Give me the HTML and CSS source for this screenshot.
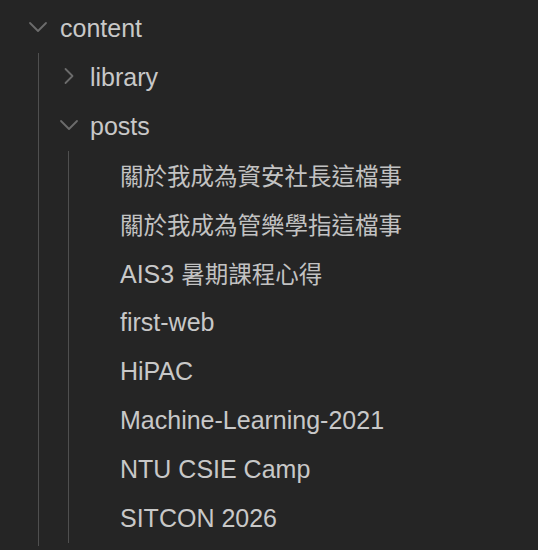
FILE: index.html
```html
<!DOCTYPE html>
<html lang="zh-Hant">
<head>
<meta charset="utf-8">
<title>Explorer</title>
<link rel="stylesheet" href="styles.css">
</head>
<body>
<div class="tree">
  <div class="row lvl0">
    <svg class="chev" viewBox="0 0 20 20"><path d="M2 6 L10 14 L18 6"/></svg>
    <span class="label">content</span>
  </div>
  <div class="children outer">
    <div class="row lvl1">
      <svg class="chev" viewBox="0 0 20 20"><path d="M6.5 3 L13.5 10 L6.5 17"/></svg>
      <span class="label">library</span>
    </div>
    <div class="row lvl1">
      <svg class="chev" viewBox="0 0 20 20"><path d="M2 6 L10 14 L18 6"/></svg>
      <span class="label">posts</span>
    </div>
    <div class="children inner">
      <div class="row file"><span class="spacer"></span><span class="label cjk">關於我成為資安社長這檔事</span></div>
      <div class="row file"><span class="spacer"></span><span class="label cjk">關於我成為管樂學指這檔事</span></div>
      <div class="row file"><span class="spacer"></span><span class="label">AIS3 <span class="cjk">暑期課程心得</span></span></div>
      <div class="row file"><span class="spacer"></span><span class="label">first-web</span></div>
      <div class="row file"><span class="spacer"></span><span class="label">HiPAC</span></div>
      <div class="row file"><span class="spacer"></span><span class="label">Machine-Learning-2021</span></div>
      <div class="row file"><span class="spacer"></span><span class="label">NTU CSIE Camp</span></div>
      <div class="row file"><span class="spacer"></span><span class="label">SITCON 2026</span></div>
    </div>
  </div>
</div>
</body>
</html>
```

FILE: styles.css
```css
html, body {
  margin: 0;
  padding: 0;
  height: 100%;
  overflow: hidden;
  background: #252525;
}

body {
  font-family: "Liberation Sans", "Noto Sans CJK TC", sans-serif;
  color: #c8c8c8;
  font-size: 25px;
}

.tree {
  padding-top: 4px;
}

.row {
  display: flex;
  align-items: center;
  height: 49px;
  line-height: 49px;
  white-space: nowrap;
}

.chev {
  width: 20px;
  height: 20px;
  flex: none;
  margin-top: -3px;
}

.chev path {
  fill: none;
  stroke: #6c6c6c;
  stroke-width: 1.8;
  stroke-linecap: round;
  stroke-linejoin: round;
}

.lvl0 {
  padding-left: 28px;
  gap: 12px;
}

.lvl1 {
  padding-left: 20px;
  gap: 11px;
}

.file {
  padding-left: 20px;
  gap: 11px;
}

.spacer {
  width: 20px;
  flex: none;
}

.cjk {
  font-family: "Noto Sans CJK TC", sans-serif;
  font-size: 23.5px;
  color: #c2c2c2;
}

.children {
  border-left: 1px solid #4f4f4f;
}

.children.outer {
  margin-left: 38px;
  padding-bottom: 3px;
}

.children.inner {
  margin-left: 29px;
}
```
